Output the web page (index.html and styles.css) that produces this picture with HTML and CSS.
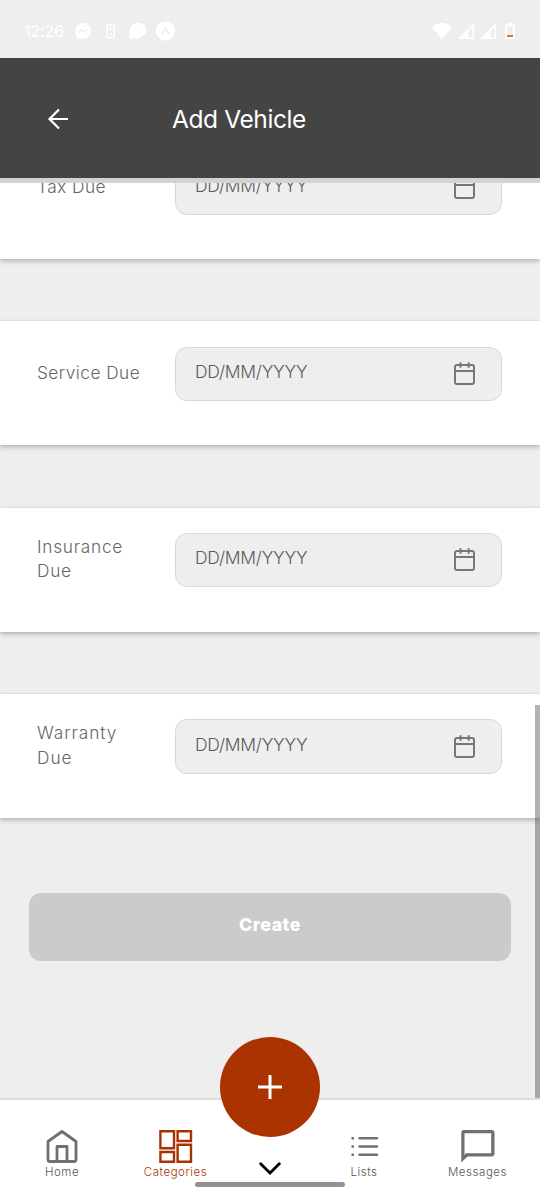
FILE: index.html
```html
<!DOCTYPE html>
<html lang="en">
<head>
<meta charset="utf-8">
<title>Add Vehicle</title>
<link rel="stylesheet" href="styles.css">
</head>
<body>
<svg class="defs" width="0" height="0">
  <symbol id="calendar" viewBox="0 0 24 26">
    <g fill="none" stroke="currentColor" stroke-width="2" stroke-linejoin="round">
      <rect x="3" y="4" width="19" height="19" rx="2"/>
      <path d="M3 10h19M8.500 1.200v5.600M16.700 1.200v5.600"/>
    </g>
  </symbol>
  <symbol id="signal" viewBox="0 0 16 16">
    <path fill="#fff" fill-rule="evenodd" d="M16 0V16H0zM10.5 8v6.3h4V4z"/>
  </symbol>
</svg>
<div class="screen">
  <div class="status">
    <span class="clock">12:26</span>
    <svg class="apps" width="102" height="22" viewBox="0 0 102 22">
      <path fill="#fff" d="M9 3a8 8 0 0 1 8 8 8 8 0 0 1-11 7.2L2.500 19l.3-3.200A8 8 0 0 1 9 3z"/>
      <path fill="none" stroke="#eee" stroke-width="1.500" d="M4.500 12.800 7.500 9.800l3 2 3-2.800"/>
      <rect x="33" y="4.500" width="7" height="13" rx="1.500" fill="none" stroke="#fff" stroke-width="1.500"/>
      <path fill="none" stroke="#fff" stroke-width="1.300" d="M36.500 7v4M35.500 14h2"/>
      <path fill="#fff" d="M55.500 18.500v-7A8 8 0 0 1 64 3c5 0 8.500 3 8.500 7.500 0 2-1 4-2.500 4.500h-2c-1 2.500-3 3.500-5.500 3.500z"/>
      <circle cx="91.500" cy="11" r="9.700" fill="#fff"/>
      <path fill="none" stroke="#eee" stroke-width="1.500" d="m88 14.500 3.500-7 3.500 7"/>
    </svg>
    <span class="grow"></span>
    <svg width="20" height="16" viewBox="0 0 20 16"><path fill="#fff" d="M0 4Q10-4 20 4L10 16z"/></svg>
    <svg class="signal" width="16" height="16"><use href="#signal"/></svg>
    <svg class="signal" width="16" height="16"><use href="#signal"/></svg>
    <svg class="battery" width="10" height="16" viewBox="0 0 10 16">
      <path fill="#fff" fill-rule="evenodd" d="M3 0h4v1.500h2a1 1 0 0 1 1 1V15a1 1 0 0 1-1 1H1a1 1 0 0 1-1-1V2.500a1 1 0 0 1 1-1h2zM2 3.500V14h6V3.500z"/>
      <path fill="#e0704c" d="M2 12h6v2H2z"/>
    </svg>
  </div>
  <header class="header">
    <svg class="back" width="22" height="22" viewBox="0 0 22 22"><path fill="none" stroke="#fff" stroke-width="2.200" d="M21 11H2.500M12 1.500 2.500 11l9.500 9.500"/></svg>
    <h1 class="title">Add Vehicle</h1>
  </header>
  <main class="content">
    <section class="card"><span class="label">Tax Due</span><div class="field"><span class="hint">DD/MM/YYYY</span><svg class="cal" width="24" height="26"><use href="#calendar"/></svg></div></section>
    <section class="card"><span class="label">Service Due</span><div class="field"><span class="hint">DD/MM/YYYY</span><svg class="cal" width="24" height="26"><use href="#calendar"/></svg></div></section>
    <section class="card"><span class="label wide">Insurance Due</span><div class="field"><span class="hint">DD/MM/YYYY</span><svg class="cal" width="24" height="26"><use href="#calendar"/></svg></div></section>
    <section class="card"><span class="label wider">Warranty Due</span><div class="field"><span class="hint">DD/MM/YYYY</span><svg class="cal" width="24" height="26"><use href="#calendar"/></svg></div></section>
    <button class="create">Create</button>
    <div class="scrollbar"></div>
  </main>
  <nav class="tabs">
    <div class="tab">
      <svg width="34" height="34" viewBox="0 0 34 34" fill="none" stroke="currentColor" stroke-width="2.800" stroke-linejoin="round"><path d="M3 11.500 17 1.500l14 10v18q0 2-2 2H5q-2 0-2-2zM12 31.500V16.500h10v15"/></svg>
      <span>Home</span>
    </div>
    <div class="tab active">
      <svg width="34" height="34" viewBox="0 0 34 34" fill="none" stroke="currentColor" stroke-width="2.400"><path d="M1.400 1.200h13.600v17h-13.600zM18.600 1.200h13.400v9.800H18.600zM1.400 22h13.600v9.800h-13.600zM18.600 14.800h13.400v17H18.600z"/></svg>
      <span>Categories</span>
    </div>
    <div class="tab"></div>
    <div class="tab">
      <svg width="34" height="34" viewBox="0 0 34 34" fill="none" stroke="currentColor" stroke-width="2.500"><path stroke-linecap="round" d="M12.500 8.300H30M12.500 16.500H30M12.500 24.700H30"/><path d="M4.500 8.300H7M4.500 16.500H7M4.500 24.700H7"/></svg>
      <span>Lists</span>
    </div>
    <div class="tab">
      <svg width="34" height="34" viewBox="0 0 34 34" fill="none"><path fill="currentColor" fill-rule="evenodd" d="M3 0H30.500q3 0 3 3v20.500q0 3-3 3H6.500L.3 32.500V3q0-3 2.700-3zM3.500 3.200V25l1.500-1.700H30.200V3.200z"/></svg>
      <span>Messages</span>
    </div>
    <div class="fab"><svg width="24" height="24" viewBox="0 0 24 24"><path stroke="#fff" stroke-width="3" d="M0 12h24M12 0v24"/></svg></div>
    <svg class="chevron" width="22" height="14" viewBox="0 0 22 14"><path fill="none" stroke="#000" stroke-width="2.800" stroke-linecap="round" d="m1.700 1.800 9.300 9.300 9.300-9.300"/></svg>
    <div class="handle"></div>
  </nav>
</div>
</body>
</html>
```
FILE: styles.css
```css
* { box-sizing: border-box; }
body { margin: 0; font-family: Inter, "Open Sans", sans-serif; background: #eee; }
.defs { position: absolute; }
.screen { width: 540px; height: 1200px; display: flex; flex-direction: column; overflow: hidden; background: #eee; }
.status { height: 58px; flex: none; display: flex; align-items: center; padding: 4px 25px 0 24px; color: #fff; }
.clock { width: 50px; font-size: 16.500px; letter-spacing: -0.4px; }
.grow { flex: 1; }
.signal { margin-left: 6px; }
.battery { margin-left: 9px; }
.header { height: 125px; flex: none; display: flex; align-items: center; padding: 0 0 0 47px; background: #444; border-bottom: 5px solid #d3d3d3; color: #fff; }
.back { flex: none; margin-top: 2px; }
.title { margin: 2px 0 0 103px; font-size: 24.500px; font-weight: 400; letter-spacing: -0.4px; white-space: nowrap; }
.content { position: relative; height: 915px; flex: none; overflow: hidden; }
.card { height: 124px; margin-bottom: 62.330px; display: flex; align-items: flex-start; padding: 25.300px 38px 0 37px; background: #fff; box-shadow: 0 2px 5px rgba(0,0,0,.25), 0 0 1px rgba(0,0,0,.12); color: #666; }
.card:first-child { margin-top: -48px; }
.label { width: 138px; height: 53px; padding-right: 27px; display: flex; align-items: center; font-size: 17.300px; line-height: 24.500px; font-weight: 350; letter-spacing: .45px; }
.wide { letter-spacing: .75px; }
.wider { letter-spacing: .95px; }
.field { flex: 1; height: 54.500px; display: flex; align-items: center; justify-content: space-between; padding: 0 25px 0 19px; border: 1px solid #d8d8d8; border-radius: 12px; background: #eee; }
.hint { margin-top: -5px; font-size: 17.500px; font-weight: 300; letter-spacing: -0.25px; color: #5c5c5c; }
.cal { color: #777; }
.create { display: block; width: 482px; height: 68px; margin: 75px 0 0 29px; padding: 0 0 4px; border: 0; border-radius: 12px; background: #cbcbcb; color: #fff; font: 800 17.800px Inter, sans-serif; letter-spacing: .5px; }
.scrollbar { position: absolute; right: 0; top: 522px; width: 5px; bottom: 0; background: rgba(0,0,0,.3); }
.tabs { position: relative; height: 102px; flex: none; display: grid; grid-template-columns: 124px 103px 86px 102px 125px; background: #fff; border-top: 2px solid #ddd; color: #707070; }
.tab { display: flex; flex-direction: column; align-items: center; padding-top: 30px; font-size: 11.500px; line-height: 16px; font-weight: 300; letter-spacing: .55px; }
.tab span { color: #555; }
.active, .active span { color: #a93200; }
.fab { position: absolute; left: 220px; top: -63px; width: 100px; height: 100px; border-radius: 50%; background: #ab3300; display: flex; align-items: center; justify-content: center; }
.chevron { position: absolute; left: 259px; top: 62px; }
.handle { position: absolute; left: 195px; top: 82px; width: 150px; height: 5px; border-radius: 3px; background: #929292; }
```
